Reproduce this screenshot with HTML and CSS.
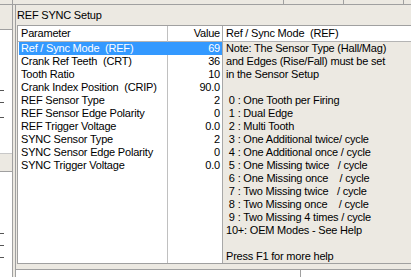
FILE: index.html
```html
<!DOCTYPE html>
<html lang="en">
<head>
    <meta charset="UTF-8">
    <meta name="viewport" content="width=device-width, initial-scale=1.0">
    <title>REF SYNC Setup</title>
    <link rel="stylesheet" href="styles.css">
</head>
<body>
    <!-- Tab strip (cut off at the top) -->
    <div class="tabstrip">
        <span class="tab tab-a"></span>
        <span class="tab tab-b"></span>
        <span class="tab tab-c"></span>
        <span class="tab tab-d"></span>
        <span class="tab tab-e"></span>
    </div>

    <div class="frame">
        <!-- Left tree panel, mostly hidden -->
        <div class="side">
            <div class="side-top"></div>
            <div class="side-list">
                <span class="mark m1"></span>
                <span class="mark m2"></span>
                <span class="mark m3"></span>
            </div>
            <div class="side-band"></div>
            <div class="side-list lower">
                <span class="mark m4"></span>
                <span class="mark m5"></span>
                <span class="mark m6"></span>
            </div>
        </div>

        <div class="splitter"></div>

        <div class="main">
            <div class="title">REF SYNC Setup</div>

            <div class="grid">
                <div class="col col-name">
                    <div class="head">Parameter</div>
                    <div class="cell sel">Ref / Sync Mode  (REF)</div>
                    <div class="cell">Crank Ref Teeth  (CRT)</div>
                    <div class="cell">Tooth Ratio</div>
                    <div class="cell">Crank Index Position  (CRIP)</div>
                    <div class="cell">REF Sensor Type</div>
                    <div class="cell">REF Sensor Edge Polarity</div>
                    <div class="cell">REF Trigger Voltage</div>
                    <div class="cell">SYNC Sensor Type</div>
                    <div class="cell">SYNC Sensor Edge Polarity</div>
                    <div class="cell">SYNC Trigger Voltage</div>
                </div>
                <div class="col col-value">
                    <div class="head">Value</div>
                    <div class="cell sel">69</div>
                    <div class="cell">36</div>
                    <div class="cell">10</div>
                    <div class="cell">90.0</div>
                    <div class="cell">2</div>
                    <div class="cell">0</div>
                    <div class="cell">0.0</div>
                    <div class="cell">2</div>
                    <div class="cell">0</div>
                    <div class="cell">0.0</div>
                </div>
                <div class="col help">
                    <div class="head">Ref / Sync Mode  (REF)</div>
                    <div class="line">Note: The Sensor Type (Hall/Mag)</div>
                    <div class="line">and Edges (Rise/Fall) must be set</div>
                    <div class="line">in the Sensor Setup</div>
                    <div class="line"> </div>
                    <div class="line"> 0 : One Tooth per Firing</div>
                    <div class="line"> 1 : Dual Edge</div>
                    <div class="line"> 2 : Multi Tooth</div>
                    <div class="line"> 3 : One Additional twice/ cycle</div>
                    <div class="line"> 4 : One Additional once / cycle</div>
                    <div class="line"> 5 : One Missing twice   / cycle</div>
                    <div class="line"> 6 : One Missing once    / cycle</div>
                    <div class="line"> 7 : Two Missing twice   / cycle</div>
                    <div class="line"> 8 : Two Missing once    / cycle</div>
                    <div class="line"> 9 : Two Missing 4 times / cycle</div>
                    <div class="line">10+: OEM Modes - See Help</div>
                    <div class="line"> </div>
                    <div class="line">Press F1 for more help</div>
                </div>
            </div>

            <div class="gap"></div>

            <!-- Next panel, cut off at the bottom -->
            <div class="bottom">
                <div class="bottom-left"></div>
                <div class="bottom-right"></div>
            </div>
        </div>
    </div>
</body>
</html>
```

FILE: styles.css
```css
/* General Page Styling */
body {
    font-family: "Liberation Sans", Arial, sans-serif;
    font-size: 11px;
    letter-spacing: -0.2px;
    background-color: #ece9e2;
    color: #000;
    margin: 0;
    padding: 0;
    width: 411px;
    height: 277px;
    overflow: hidden;
}

/* Tab strip at the very top */
.tabstrip {
    display: flex;
    height: 4px;
    border-bottom: 1px solid #a0a0a0;
}

.tab {
    border-right: 1px solid #a0a0a0;
}

.tab-a { width: 12px; }
.tab-b { width: 270px; }
.tab-c { width: 59px; }
.tab-d { width: 59px; }
.tab-e { flex: 1; border-right: none; }

.frame {
    display: flex;
    height: 272px;
}

/* Left tree panel */
.side {
    width: 12px;
    display: flex;
    flex-direction: column;
}

.side-top {
    height: 24px;
    border-bottom: 1px solid #a0a0a0;
}

.side-list {
    position: relative;
    height: 123px;
    background-color: #fff;
}

.side-list.lower {
    flex: 1;
}

.side-band {
    height: 17px;
    border-top: 1px solid #c8c8c8;
    border-bottom: 1px solid #a0a0a0;
}

.mark {
    position: absolute;
    left: 0;
    width: 4px;
    border-top: 1px solid #555;
}

.m1 { top: 60px; }
.m2 { top: 72px; }
.m3 { top: 87px; }
.m4 { top: 61px; }
.m5 { top: 73px; }
.m6 { top: 85px; }

/* Splitter between panels */
.splitter {
    width: 2px;
    border-left: 1px solid #a0a0a0;
    border-right: 1px solid #a0a0a0;
}

/* Main setup panel */
.main {
    flex: 1;
    display: flex;
    flex-direction: column;
}

.title {
    height: 20px;
    line-height: 21px;
    padding-left: 1px;
    white-space: pre;
}

.grid {
    display: flex;
    height: 237px;
    margin-left: 1px;
    border-top: 1px solid #a0a0a0;
    border-bottom: 1px solid #a0a0a0;
    border-left: 1px solid #a0a0a0;
    background-color: #fff;
}

.col {
    display: flex;
    flex-direction: column;
}

.head {
    height: 15px;
    line-height: 15px;
    border-bottom: 1px solid #b4b4b4;
    white-space: pre;
}

.cell,
.line {
    height: 13px;
    line-height: 13px;
    white-space: pre;
}

.col-name {
    width: 149px;
    border-right: 1px solid #c0c0c0;
}

.col-name .head {
    padding-left: 3px;
}

.col-name .cell {
    margin-left: 1px;
    padding-left: 2px;
}

.col-value {
    width: 54px;
    border-right: 1px solid #a8a8a8;
    text-align: right;
}

.col-value .head,
.col-value .cell {
    padding-right: 2px;
}

/* Selected row */
.cell.sel {
    background-color: #3399ff;
    color: #fff;
}

.col-name .cell.sel {
    margin-right: -1px;
}

/* Help text */
.help {
    flex: 1;
    background-color: #ece9e2;
}

.help .head {
    background-color: #fff;
    padding-left: 3px;
}

.help .line {
    padding-left: 3px;
}

.gap {
    height: 5px;
}

.bottom {
    flex: 1;
    display: flex;
    border-top: 1px solid #a0a0a0;
    background-color: #fff;
}

.bottom-left {
    width: 284px;
    border-right: 1px solid #a0a0a0;
}

.bottom-right {
    flex: 1;
}
```
